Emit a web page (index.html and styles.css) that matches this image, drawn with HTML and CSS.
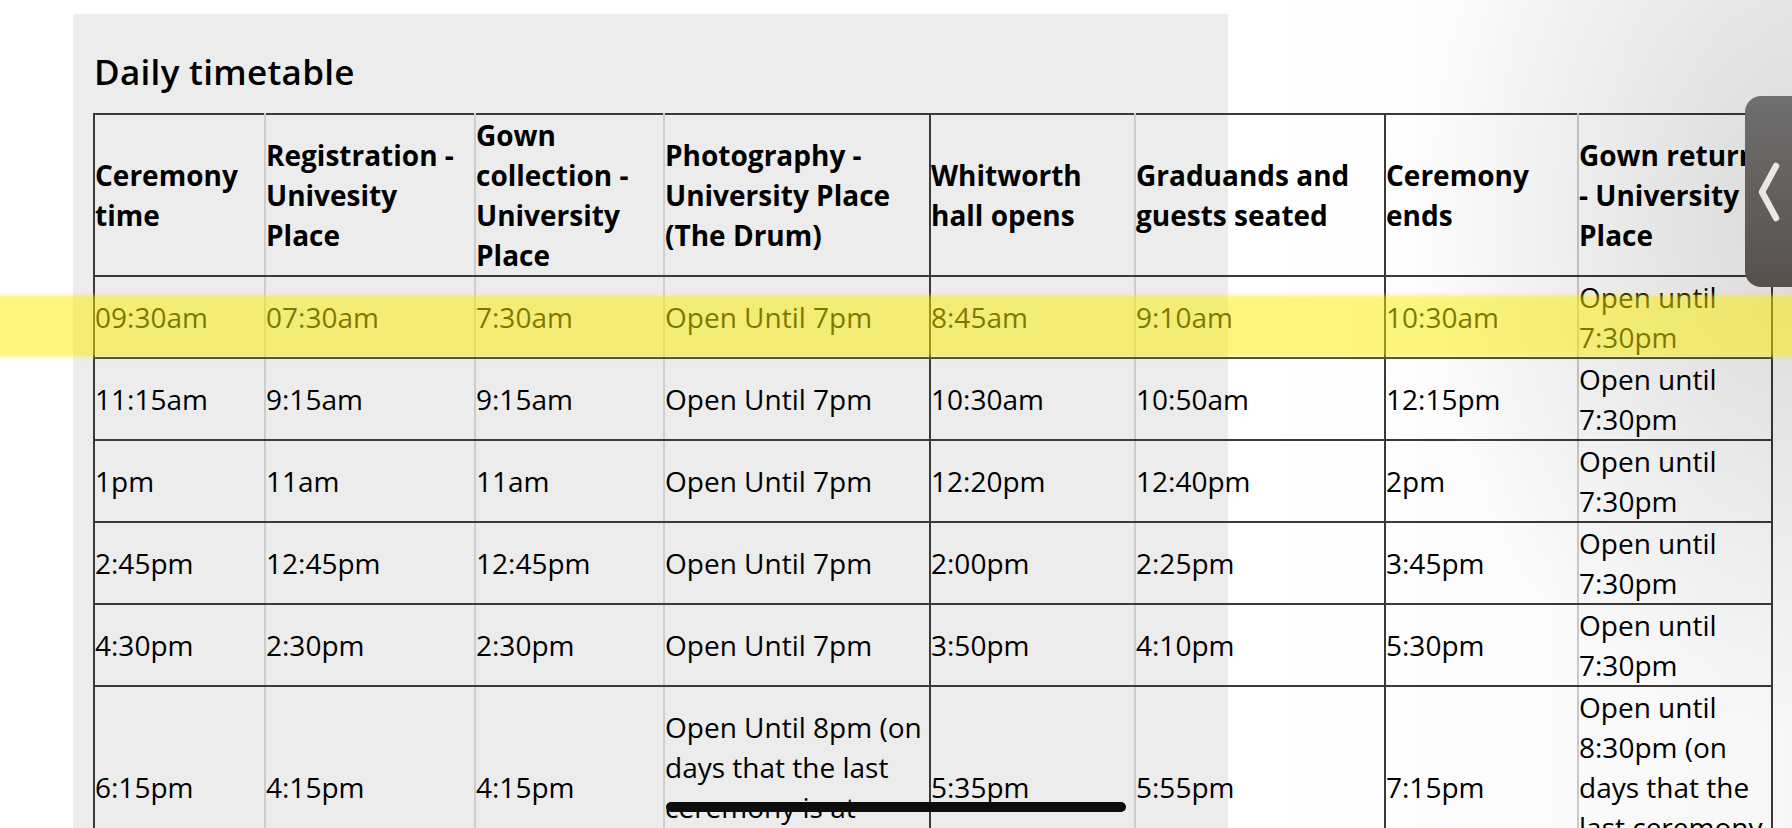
FILE: index.html
```html
<!DOCTYPE html>
<html lang="en">
<head>
<meta charset="utf-8">
<title>Daily timetable</title>
<link rel="stylesheet" href="styles.css">
</head>
<body>
<div class="page">
  <section class="panel">
    <h2 class="title">Daily timetable</h2>
    <table class="timetable">
      <colgroup>
        <col class="c1"><col class="c2"><col class="c3"><col class="c4">
        <col class="c5"><col class="c6"><col class="c7"><col class="c8">
      </colgroup>
      <thead>
        <tr>
          <th>Ceremony time</th>
          <th>Registration - Univesity Place</th>
          <th>Gown collection - University Place</th>
          <th>Photography - University Place (The Drum)</th>
          <th>Whitworth hall opens</th>
          <th>Graduands and guests seated</th>
          <th>Ceremony ends</th>
          <th>Gown return - University Place</th>
        </tr>
      </thead>
      <tbody>
        <tr>
          <td>09:30am</td><td>07:30am</td><td>7:30am</td><td>Open Until 7pm</td>
          <td>8:45am</td><td>9:10am</td><td>10:30am</td><td>Open until 7:30pm</td>
        </tr>
        <tr>
          <td>11:15am</td><td>9:15am</td><td>9:15am</td><td>Open Until 7pm</td>
          <td>10:30am</td><td>10:50am</td><td>12:15pm</td><td>Open until 7:30pm</td>
        </tr>
        <tr>
          <td>1pm</td><td>11am</td><td>11am</td><td>Open Until 7pm</td>
          <td>12:20pm</td><td>12:40pm</td><td>2pm</td><td>Open until 7:30pm</td>
        </tr>
        <tr>
          <td>2:45pm</td><td>12:45pm</td><td>12:45pm</td><td>Open Until 7pm</td>
          <td>2:00pm</td><td>2:25pm</td><td>3:45pm</td><td>Open until 7:30pm</td>
        </tr>
        <tr>
          <td>4:30pm</td><td>2:30pm</td><td>2:30pm</td><td>Open Until 7pm</td>
          <td>3:50pm</td><td>4:10pm</td><td>5:30pm</td><td>Open until 7:30pm</td>
        </tr>
        <tr>
          <td>6:15pm</td><td>4:15pm</td><td>4:15pm</td><td>Open Until 8pm (on days that the last ceremony is at 6:15pm)</td>
          <td>5:35pm</td><td>5:55pm</td><td>7:15pm</td><td>Open until 8:30pm (on days that the last ceremony is at 6:15pm)</td>
        </tr>
      </tbody>
    </table>
  </section>
</div>

<div class="shade"></div>
<div class="highlight"></div>

<button class="handle" type="button" aria-label="Open panel">
  <svg class="chev" width="30" height="60" viewBox="0 0 30 60" aria-hidden="true">
    <polyline points="22,4 8,30 22,56" fill="none" stroke="#ebe7e2" stroke-width="6.5" stroke-linecap="round" stroke-linejoin="round"/>
  </svg>
</button>

<div class="scrollbar"></div>
</body>
</html>
```

FILE: styles.css
```css
html, body {
  margin: 0;
  padding: 0;
  overflow: hidden;
  background: #ffffff;
}

body {
  font-family: "Open Sans", "Liberation Sans", sans-serif;
  color: #000;
  width: 1792px;
  height: 828px;
  position: relative;
}

.page {
  padding: 14px 0 0 73px;
}

.panel {
  width: 1155px;
  min-height: 900px;
  background: #ececec;
  padding: 37px 0 0 0;
  box-sizing: border-box;
}

.title {
  margin: 0 0 20px 21px;
  font-size: 35px;
  line-height: 42px;
  font-weight: 600;
  letter-spacing: 0.3px;
}

.timetable {
  margin-left: 20px;
  border-collapse: collapse;
  table-layout: fixed;
  width: 1678px;
  font-size: 28px;
  line-height: 40px;
}

.c1 { width: 171px; }
.c2 { width: 210px; }
.c3 { width: 189px; }
.c4 { width: 266px; }
.c5 { width: 205px; }
.c6 { width: 250px; }
.c7 { width: 193px; }
.c8 { width: 194px; }

.timetable th,
.timetable td {
  padding: 0 2px 0 0;
  text-align: left;
  vertical-align: middle;
  border-top: 2px solid #3a3a3a;
  border-bottom: 2px solid #3a3a3a;
  border-left: 2px solid #cdcdcd;
  border-right: 2px solid #cdcdcd;
}

.timetable th {
  font-weight: 700;
}

.timetable td {
  font-weight: 400;
}

.timetable th:nth-child(1),
.timetable td:nth-child(1) {
  border-left-color: #3a3a3a;
}

.timetable th:nth-child(4),
.timetable td:nth-child(4),
.timetable th:nth-child(6),
.timetable td:nth-child(6),
.timetable th:nth-child(8),
.timetable td:nth-child(8) {
  border-right-color: #3a3a3a;
}

.shade {
  position: absolute;
  top: 0;
  left: 1250px;
  width: 542px;
  height: 828px;
  pointer-events: none;
  background:
    radial-gradient(ellipse 380px 520px at 100% 26%, rgba(0, 0, 0, 0.12), rgba(0, 0, 0, 0) 100%),
    linear-gradient(to right, rgba(0, 0, 0, 0) 0%, rgba(0, 0, 0, 0.03) 100%);
}

.highlight {
  position: absolute;
  left: -10px;
  top: 295px;
  width: 1812px;
  height: 62px;
  background: rgba(250, 238, 0, 0.5);
  filter: blur(2px);
  pointer-events: none;
}

.handle {
  position: absolute;
  left: 1745px;
  top: 96px;
  width: 70px;
  height: 191px;
  border: 0;
  padding: 0 0 0 9px;
  margin: 0;
  border-radius: 16px;
  background: linear-gradient(180deg, #6f6f6f 0%, #625e5b 55%, #57514d 100%);
  display: flex;
  align-items: center;
  justify-content: flex-start;
}

.chev {
  display: block;
}

.scrollbar {
  position: absolute;
  left: 666px;
  top: 802px;
  width: 460px;
  height: 10px;
  border-radius: 5px;
  background: #0d0d0d;
}
```
